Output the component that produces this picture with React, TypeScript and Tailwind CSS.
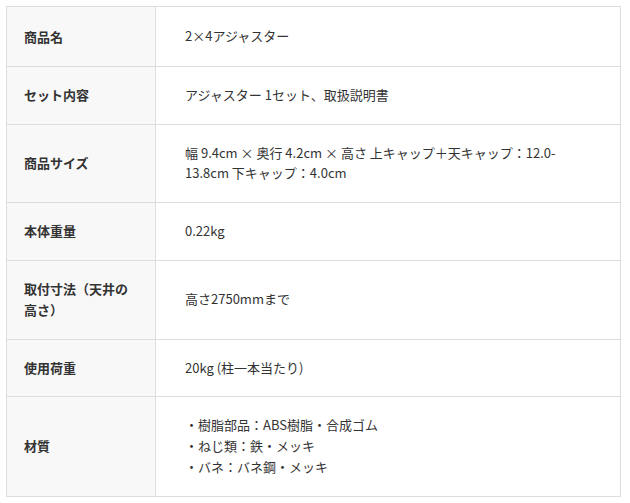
import React from 'react';

interface SpecRow {
    label: string;
    value: React.ReactNode;
}

const rows: SpecRow[] = [
    { label: '商品名', value: '2×4アジャスター' },
    { label: 'セット内容', value: 'アジャスター 1セット、取扱説明書' },
    { label: '商品サイズ', value: '幅 9.4cm × 奥行 4.2cm × 高さ 上キャップ＋天キャップ：12.0-13.8cm 下キャップ：4.0cm' },
    { label: '本体重量', value: '0.22kg' },
    { label: '取付寸法（天井の高さ）', value: '高さ2750mmまで' },
    { label: '使用荷重', value: '20kg (柱一本当たり)' },
    {
        label: '材質',
        value: (
            <>
                ・樹脂部品：ABS樹脂・合成ゴム<br />
                ・ねじ類：鉄・メッキ<br />
                ・バネ：バネ鋼・メッキ
            </>
        ),
    },
];

export default function App() {
    return (
        <div className="w-[630px] h-[503px] bg-white pt-[6px] pl-[6px] font-['Noto_Sans_CJK_JP',sans-serif] text-[13px] leading-[1.6] text-[#333]">
            <table className="w-[615px] border-collapse table-fixed">
                <colgroup>
                    <col className="w-[149px]" />
                    <col />
                </colgroup>
                <tbody>
                    {rows.map((row, i) => (
                        <tr key={row.label}>
                            <th className={`border border-[#ddd] bg-[#f8f8f8] ${i === 0 ? 'pt-[20px]' : 'pt-[18px]'} pb-[18px] px-[17px] text-left align-middle font-bold`}>
                                {row.label}
                            </th>
                            <td className="border border-[#ddd] py-[18px] pl-[29px] pr-[40px] align-middle">
                                {row.value}
                            </td>
                        </tr>
                    ))}
                </tbody>
            </table>
        </div>
    );
}
